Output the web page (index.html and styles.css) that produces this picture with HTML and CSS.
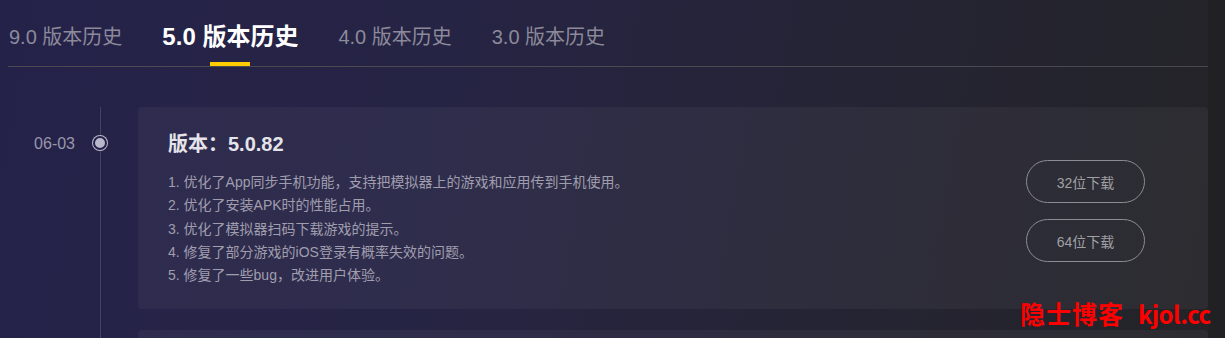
FILE: index.html
```html
<!DOCTYPE html>
<html lang="zh-CN">
<head>
<meta charset="utf-8">
<title>版本历史</title>
<link rel="stylesheet" href="styles.css">
</head>
<body>
<div class="page">
  <nav class="tabs">
    <a class="tab">9.0 版本历史</a>
    <a class="tab active">5.0 版本历史</a>
    <a class="tab">4.0 版本历史</a>
    <a class="tab">3.0 版本历史</a>
  </nav>
  <div class="timeline">
    <div class="item">
      <div class="date">06-03</div>
      <div class="dot-col"><span class="dot"></span></div>
      <div class="card">
        <div class="info">
          <h3 class="title">版本：5.0.82</h3>
          <ol class="notes">
            <li>1. 优化了App同步手机功能，支持把模拟器上的游戏和应用传到手机使用。</li>
            <li>2. 优化了安装APK时的性能占用。</li>
            <li>3. 优化了模拟器扫码下载游戏的提示。</li>
            <li>4. 修复了部分游戏的iOS登录有概率失效的问题。</li>
            <li>5. 修复了一些bug，改进用户体验。</li>
          </ol>
        </div>
        <div class="actions">
          <a class="btn">32位下载</a>
          <a class="btn">64位下载</a>
        </div>
      </div>
    </div>
    <div class="item">
      <div class="date"></div>
      <div class="dot-col"></div>
      <div class="card card-next"></div>
    </div>
  </div>
</div>
<div class="watermark"><span class="wm-cn">隐士博客</span><span class="wm-en">kjol.cc</span></div>
</body>
</html>
```

FILE: styles.css
```css
html {
  background: #212124;
  overflow: hidden;
}
body {
  margin: 0;
  font-family: "Liberation Sans", Arial, "Noto Sans CJK SC", sans-serif;
}
.page {
  width: 1208px;
  min-height: 338px;
  background: linear-gradient(100deg, #25224a 0%, #262444 35%, #252433 70%, #232326 100%);
}
.tabs {
  display: flex;
  align-items: flex-end;
  gap: 40px;
  padding: 22px 0 0 1px;
  margin-left: 8px;
  height: 44px;
  border-bottom: 1px solid #4a4950;
}
.tab {
  position: relative;
  font-size: 20px;
  line-height: 30px;
  color: #8c8a9a;
  padding-bottom: 14px;
  white-space: nowrap;
}
.tab.active {
  font-size: 24px;
  font-weight: bold;
  color: #ffffff;
}
.tab.active::after {
  content: "";
  position: absolute;
  left: 50%;
  bottom: 0;
  width: 40px;
  height: 4px;
  margin-left: -20px;
  background: #ffcc00;
}
.timeline {
  margin-top: 40px;
  background: linear-gradient(#46435e, #46435e) no-repeat 100px 0 / 1px 100%;
}
.item {
  display: grid;
  grid-template-columns: 84px 32px 1fr;
  padding-bottom: 21px;
}
.date {
  margin-top: 23px;
  line-height: 28px;
  font-size: 16px;
  color: #9896ab;
  text-align: right;
  padding-right: 9px;
}
.dot-col {
  display: flex;
  justify-content: center;
  align-items: flex-start;
  padding-top: 29px;
}
.dot {
  width: 10px;
  height: 10px;
  border-radius: 50%;
  background: #bab8cb;
  border: 2px solid #25224a;
  box-shadow: 0 0 0 1px #bab8cb;
}
.card {
  display: flex;
  justify-content: space-between;
  margin-left: 22px;
  border-radius: 4px;
  background: rgba(255, 255, 255, 0.045);
  padding: 23px 63px 21px 30px;
  min-height: 158px;
}
.title {
  margin: 0;
  font-size: 20px;
  line-height: 28px;
  font-weight: bold;
  color: #e4e4ea;
}
.notes {
  list-style: none;
  margin: 13px 0 0;
  padding: 0;
  font-size: 14px;
  line-height: 23.3px;
  color: #a09eae;
}
.actions {
  display: flex;
  flex-direction: column;
  gap: 16px;
  margin-top: 30px;
}
.btn {
  display: flex;
  align-items: center;
  justify-content: center;
  width: 117px;
  height: 41px;
  border: 1px solid #8d8c92;
  border-radius: 22px;
  font-size: 14px;
  color: #a0a0a4;
}
.watermark {
  position: absolute;
  left: 1020px;
  top: 297px;
  display: flex;
  align-items: baseline;
  gap: 14px;
  font-family: "Noto Sans CJK SC", sans-serif;
  font-size: 25px;
  line-height: 32px;
  font-weight: bold;
  color: #ff0000;
  white-space: nowrap;
}
.wm-cn {
  letter-spacing: 1px;
}
.wm-en {
  font-size: 24px;
  letter-spacing: -0.5px;
}
```
